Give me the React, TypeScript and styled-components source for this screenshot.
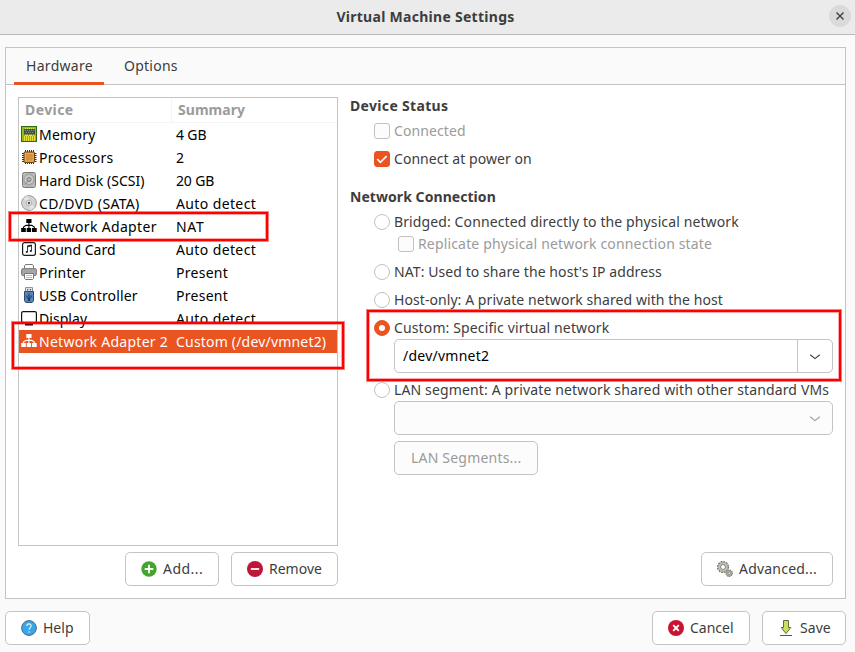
import React from 'react';
import styled, { createGlobalStyle, css } from 'styled-components';

const GlobalStyle = createGlobalStyle`
  * { box-sizing: border-box; }
  html, body { margin: 0; padding: 0; background: #fafafa; overflow: hidden; }
  body { font-family: 'Noto Sans', sans-serif; font-size: 14px; color: #3d3d3d; }
  svg { display: block; flex: none; }
`;

const orange = '#e95420';
const line = '#c4c4c4';

const Window = styled.div`
  position: relative;
  width: 855px;
  height: 652px;
  display: flex;
  flex-direction: column;
  background: #fafafa;
`;

const TitleBar = styled.header`
  height: 35px;
  flex: none;
  display: grid;
  grid-template-columns: 30px 1fr 30px;
  align-items: center;
  padding-bottom: 2px;
  background: #ebebeb;
  border-bottom: 1px solid #bababa;
`;

const Title = styled.h1`
  grid-column: 2;
  margin: 0;
  padding: 2px 4px 0 0;
  text-align: center;
  font-size: 14px;
  line-height: 30px;
  font-weight: 700;
  letter-spacing: 0.28px;
`;

const CloseButton = styled.button`
  width: 22px;
  height: 22px;
  margin-left: 4px;
  padding: 0;
  border: 0;
  border-radius: 50%;
  display: grid;
  place-items: center;
  background: #dadada;
`;

const Notebook = styled.main`
  width: 841px;
  height: 552px;
  margin: 12px 0 0 5px;
  flex: none;
  border: 1px solid ${line};
  background: #fff;
  display: flex;
  flex-direction: column;
`;

const TabBar = styled.nav`
  height: 37px;
  flex: none;
  display: flex;
  padding-left: 8px;
  background: #fafafa;
  border-bottom: 1px solid ${line};
`;

const Tab = styled.button<{ $active?: boolean; $track: number }>`
  height: 37px;
  padding: 2px 11px 0 12px;
  border: 0;
  border-bottom: 3px solid ${p => (p.$active ? orange : 'transparent')};
  background: none;
  color: inherit;
  font: inherit;
  line-height: 32px;
  letter-spacing: ${p => p.$track}px;
  & + & { margin-left: 8px; }
`;

const Page = styled.div`
  flex: 1;
  display: grid;
  grid-template-columns: 320px 483px;
  column-gap: 12px;
  padding: 12px 0 0 12px;
`;

const Column = styled.section`
  height: 489px;
  display: flex;
  flex-direction: column;
  justify-content: space-between;
`;

const DeviceTable = styled.div`
  height: 449px;
  border: 1px solid ${line};
  background: #fff;
`;

const TableHead = styled.div`
  height: 25px;
  display: grid;
  grid-template-columns: 152px 1fr;
  border-bottom: 1px solid #f5f5f5;
  color: #9b9b9b;
  font-weight: 700;
  line-height: 24px;
`;

const HeadCell = styled.div<{ $track: number }>`
  padding-left: 6px;
  letter-spacing: ${p => p.$track}px;
  & + & { border-left: 1px solid #f5f5f5; }
`;

const DeviceRow = styled.div<{ $selected?: boolean }>`
  height: 23px;
  display: grid;
  grid-template-columns: 20px 137px 1fr;
  align-items: center;
  line-height: 23px;
  white-space: nowrap;
  color: ${p => (p.$selected ? '#fff' : '#000')};
  background: ${p => (p.$selected ? orange : 'transparent')};
`;

const IconCell = styled.div`
  padding: 0 0 1px 2px;
`;

const Text = styled.span<{ $track: number }>`
  letter-spacing: ${p => p.$track}px;
  white-space: nowrap;
`;

const ButtonRow = styled.div`
  display: flex;
  justify-content: flex-end;
  gap: 12px;
`;

const Button = styled.button<{ $width: number; $disabled?: boolean; $track?: number }>`
  width: ${p => p.$width}px;
  height: 34px;
  padding: 0 0 1px 15px;
  display: flex;
  align-items: center;
  gap: 6px;
  border: 1px solid ${line};
  border-radius: 5px;
  background: #fff;
  color: inherit;
  font: inherit;
  letter-spacing: ${p => p.$track ?? 0}px;
  white-space: nowrap;
  ${p => p.$disabled && css`background: #fcfcfc; color: #9b9b9b; padding-left: 16px;`}
`;

const Heading = styled.h2`
  margin: 0;
  height: 18px;
  font-size: 14px;
  line-height: 18px;
  font-weight: 700;
`;

const Settings = styled.div`
  display: flex;
  flex-direction: column;
`;

const Section = styled(Heading)`
  margin-top: 20px;
`;

const Option = styled.label<{ $top: number; $indent?: number; $disabled?: boolean }>`
  height: 18px;
  margin-top: ${p => p.$top}px;
  margin-left: ${p => p.$indent ?? 24}px;
  display: flex;
  align-items: center;
  gap: 4px;
  line-height: 18px;
  color: ${p => (p.$disabled ? '#9b9b9b' : 'inherit')};
`;

const Check = styled.span<{ $on?: boolean; $disabled?: boolean }>`
  width: 16px;
  height: 16px;
  flex: none;
  display: grid;
  place-items: center;
  border: 1px solid ${p => (p.$on ? orange : '#c2c2c2')};
  border-radius: 3px;
  background: ${p => (p.$on ? orange : p.$disabled ? '#fcfcfc' : '#fff')};
`;

const Radio = styled(Check)`
  border-radius: 50%;
  &::after {
    content: '';
    width: 6px;
    height: 6px;
    border-radius: 50%;
    background: #fff;
  }
`;

const Combo = styled.div<{ $top: number; $disabled?: boolean }>`
  width: 439px;
  height: 34px;
  margin: ${p => p.$top}px 0 0 44px;
  display: grid;
  grid-template-columns: 1fr 35px;
  border: 1px solid ${line};
  border-radius: 5px;
  background: ${p => (p.$disabled ? '#fcfcfc' : '#fff')};
  color: ${p => (p.$disabled ? '#9b9b9b' : '#3d3d3d')};
`;

const ComboValue = styled.span`
  padding-left: 8px;
  line-height: 32px;
  color: #000;
  letter-spacing: 0.24px;
`;

const ComboArrow = styled.span<{ $divided?: boolean }>`
  display: grid;
  place-items: center;
  padding-top: 2px;
  border-left: 1px solid ${p => (p.$divided ? line : 'transparent')};
`;

const SegmentRow = styled.div`
  margin: 6px 0 0 44px;
`;

const AdvancedRow = styled(ButtonRow)`
  width: 483px;
`;

const Footer = styled.footer`
  display: flex;
  gap: 12px;
  padding: 12px 9px 0 5px;
`;

const Spacer = styled.div`
  flex: 1;
`;

const Highlight = styled.div<{ $x: number; $y: number; $w: number; $h: number }>`
  position: absolute;
  left: ${p => p.$x}px;
  top: ${p => p.$y}px;
  width: ${p => p.$w}px;
  height: ${p => p.$h}px;
  border: 2px solid #fe0000;
  box-shadow: 0 0 0 1px rgba(254, 0, 0, 0.5), inset 0 0 0 1px rgba(254, 0, 0, 0.35);
  pointer-events: none;
`;

const Icon = ({ children }: { children: React.ReactNode }) => (
  <svg width="16" height="16" viewBox="0 0 16 16">{children}</svg>
);

const MemoryIcon = () => (
  <Icon>
    <rect x=".5" y=".5" width="15" height="15" fill="#86b81a" stroke="#2f6b0c" />
    <path d="M1.5 14.5V1.5h13v13" fill="none" stroke="#8fc41f" />
    <path d="M3.5 10v5M5.5 9v6M7.5 10v5M9.5 9v6M11.5 10v5M13.5 10v5" stroke="#e8df38" />
    <path d="M4.5 2v8M6.5 2v8M8.5 2v8M10.5 2v8M12.5 2v8" stroke="#d9d9cf" />
    <rect x="3" y="3" width="11" height="5.5" fill="#4d4f4a" />
    <path d="M4 4.5h9M5 6.5h8" stroke="#8b8d88" strokeDasharray="1 1" />
  </Icon>
);

const CpuIcon = () => (
  <Icon>
    <path d="M4.5 1v14M6.5 1v14M8.5 1v14M10.5 1v14M12.5 1v14M1 4.5h14.5M1 6.5h14.5M1 8.5h14.5M1 10.5h14.5M1 12.5h14.5" stroke="#3e2d13" />
    <rect x="3" y="3" width="10.5" height="10.5" rx="1" fill="#dd9a3c" stroke="#6b4511" />
    <rect x="4.5" y="4.5" width="7.5" height="7.5" fill="#d6913a" stroke="#e8b264" strokeWidth=".8" />
  </Icon>
);

const DiskIcon = () => (
  <Icon>
    <rect x="1.5" y=".5" width="13" height="15" rx="2" fill="#b5b6b4" stroke="#777977" />
    <circle cx="8" cy="7.5" r="5" fill="#c9cac8" stroke="#9a9c9a" />
    <circle cx="8" cy="7.5" r="2" fill="#b9b9b9" stroke="#777877" />
    <path d="M4 12.5l3-3.5" stroke="#888" />
    <path d="M3 2.5h.01M13 2.5h.01M13 13.5h.01M3 13.5h.01" stroke="#e4e4e4" strokeLinecap="round" />
  </Icon>
);

const DiscIcon = () => (
  <Icon>
    <circle cx="8" cy="8" r="7.4" fill="#d3d3d1" stroke="#9a9b99" />
    <path d="M8 8L2.5 4A7 7 0 0 1 7 1zM8 8l5.5 4A7 7 0 0 1 9 15z" fill="#e6e6e6" />
    <circle cx="8" cy="8" r="2.8" fill="#e9e9e9" stroke="#b5b5b5" />
    <circle cx="8" cy="8" r="1.2" fill="#555" />
  </Icon>
);

const NetworkIcon = () => (
  <Icon>
    <path d="M5.3 1h5.2v4H5.3zM.2 10h4.6v4H.2zM5.7 10h4.4v4H5.7zM11 10h4.7v4H11z" fill="currentColor" />
    <path d="M7.9 5v5.5M2.5 10.5V9L5 7.4h5.8L13.3 9v1.5" fill="none" stroke="currentColor" strokeWidth="1.1" />
  </Icon>
);

const SoundIcon = () => (
  <Icon>
    <rect x="1.6" y="1.6" width="12.8" height="12.8" rx="2" fill="#fff" stroke="#1b1b1b" strokeWidth="1.2" />
    <path d="M6.5 11V5l4-1v6" fill="none" stroke="#222" strokeWidth=".9" />
    <path d="M6.5 5.5l4-1" stroke="#222" strokeWidth="1.3" />
    <circle cx="5.8" cy="11" r="1.1" fill="#222" />
    <circle cx="9.8" cy="10" r="1.1" fill="#222" />
  </Icon>
);

const PrinterIcon = () => (
  <Icon>
    <path d="M3.5 6V2l1-1.5h7l1 1.5v4" fill="#fff" stroke="#777" />
    <rect x=".6" y="4.6" width="14.8" height="7" rx="1.5" fill="#a5a5a5" stroke="#7d7d7d" />
    <path d="M3.5 9.5h9v4.8l-1 1.2h-7l-1-1.2z" fill="#fff" stroke="#777" />
    <path d="M5 11.5h6M5 13.5h6" stroke="#b9b4ee" />
  </Icon>
);

const UsbIcon = () => (
  <Icon>
    <path d="M4.5 5V.6h7V5" fill="#ececec" stroke="#888" />
    <path d="M6 2h1.3v1.5H6zM8.8 2h1.3v1.5H8.8z" fill="#555" />
    <path d="M3.5 4.5h9v9.3l-1.3 1.7H4.8l-1.3-1.7z" fill="#5585b8" stroke="#2c4c70" />
    <path d="M8 6.5v7M5.9 8.5v1.7L8 12l2.1-1.8V8.5" fill="none" stroke="#152e4c" strokeWidth=".9" />
    <circle cx="8" cy="13" r="1" fill="#152e4c" />
  </Icon>
);

const DisplayIcon = () => (
  <Icon>
    <rect x=".6" y="1.6" width="14.8" height="11" rx="1.5" fill="#fff" stroke="#111" strokeWidth="1.2" />
    <path d="M6 12.5h4V14h2v1.5H4V14h2z" fill="#000" />
  </Icon>
);

const AddIcon = () => (
  <Icon>
    <circle cx="8" cy="8" r="7.7" fill="#43a52b" />
    <path d="M8 3.7v8.6M3.7 8h8.6" stroke="#fff" strokeWidth="1.8" />
  </Icon>
);

const RemoveIcon = () => (
  <Icon>
    <circle cx="8" cy="8" r="8" fill="#be1639" />
    <path d="M3.8 8h8.4" stroke="#f5e4e8" strokeWidth="2" />
  </Icon>
);

const HelpIcon = () => (
  <Icon>
    <circle cx="8" cy="8" r="7.4" fill="#38a6e8" stroke="#55697a" />
    <path d="M5.8 5.9C5.9 3 10.3 3.2 10.1 5.9 10 7.7 8 7.6 8 9.8M8 11.2v1.5" fill="none" stroke="#e3f3fd" strokeWidth="1.2" />
  </Icon>
);

const CancelIcon = () => (
  <Icon>
    <circle cx="8" cy="8" r="8" fill="#cb1230" />
    <path d="M5.2 5.2l5.6 5.6M10.8 5.2l-5.6 5.6" stroke="#fff" strokeWidth="1.9" />
  </Icon>
);

const SaveIcon = () => (
  <Icon>
    <path d="M5.5.5h5v7h2.3L8 13.6 3.2 7.5h2.3z" fill="#c5e256" stroke="#626a4b" />
    <path d="M2 15.5h12" stroke="#555" />
  </Icon>
);

const GearsIcon = () => (
  <Icon>
    <circle cx="6" cy="6" r="5.4" fill="none" stroke="#65655f" strokeWidth="1.2" strokeDasharray="1.7 1.1" />
    <circle cx="6" cy="6" r="3.7" fill="#fff" stroke="#c3c2b7" strokeWidth="2.2" />
    <circle cx="6" cy="6" r="4.9" fill="none" stroke="#7a7a72" strokeWidth=".6" />
    <circle cx="6" cy="6" r="2.5" fill="#fff" stroke="#66665f" strokeWidth=".8" />
    <circle cx="12.2" cy="12.2" r="3.3" fill="#c3c2b7" stroke="#65655f" strokeDasharray="1.2 .8" />
    <circle cx="12.2" cy="12.2" r="2.8" fill="#c3c2b7" stroke="#77776f" strokeWidth=".5" />
    <circle cx="12.2" cy="12.2" r="1.3" fill="#fff" stroke="#66665f" strokeWidth=".8" />
  </Icon>
);

const Chevron = () => (
  <svg width="12" height="8" viewBox="0 0 12 8">
    <path d="M1.2 1.8L6 5.6l4.8-3.8" fill="none" stroke="currentColor" strokeWidth="1.1" />
  </svg>
);

const Tick = () => (
  <svg width="14" height="14" viewBox="0 0 14 14">
    <path d="M2.2 7l3.2 3.3 6.2-6.2" fill="none" stroke="#fff" strokeWidth="1.7" />
  </svg>
);

type Device = { icon: React.FC; name: string; track: number; summary: string; sumTrack: number; selected?: boolean };

const devices: Device[] = [
  { icon: MemoryIcon, name: 'Memory', track: 0.25, summary: '4 GB', sumTrack: -0.15 },
  { icon: CpuIcon, name: 'Processors', track: 0.32, summary: '2', sumTrack: 0 },
  { icon: DiskIcon, name: 'Hard Disk (SCSI)', track: 0.03, summary: '20 GB', sumTrack: -0.15 },
  { icon: DiscIcon, name: 'CD/DVD (SATA)', track: 0.32, summary: 'Auto detect', sumTrack: 0.38 },
  { icon: NetworkIcon, name: 'Network Adapter', track: 0.34, summary: 'NAT', sumTrack: 0.7 },
  { icon: SoundIcon, name: 'Sound Card', track: 0, summary: 'Auto detect', sumTrack: 0.38 },
  { icon: PrinterIcon, name: 'Printer', track: 0.22, summary: 'Present', sumTrack: 0.28 },
  { icon: UsbIcon, name: 'USB Controller', track: 0.15, summary: 'Present', sumTrack: 0.28 },
  { icon: DisplayIcon, name: 'Display', track: 0.05, summary: 'Auto detect', sumTrack: 0.38 },
  { icon: NetworkIcon, name: 'Network Adapter 2', track: 0.28, summary: 'Custom (/dev/vmnet2)', sumTrack: 0.19, selected: true },
];

export default function App() {
  return (
    <Window>
      <GlobalStyle />
      <TitleBar>
        <Title>Virtual Machine Settings</Title>
        <CloseButton aria-label="Close">
          <svg width="8" height="8" viewBox="0 0 8 8">
            <path d="M.5.5l7 7M7.5.5l-7 7" stroke="#3d3d3d" strokeWidth="1.4" />
          </svg>
        </CloseButton>
      </TitleBar>

      <Notebook>
        <TabBar>
          <Tab $active $track={0.3}>Hardware</Tab>
          <Tab $track={0.25}>Options</Tab>
        </TabBar>
        <Page>
          <Column>
            <DeviceTable>
              <TableHead>
                <HeadCell $track={0.42}>Device</HeadCell>
                <HeadCell $track={0.04}>Summary</HeadCell>
              </TableHead>
              {devices.map(d => (
                <DeviceRow key={d.name} $selected={d.selected}>
                  <IconCell><d.icon /></IconCell>
                  <Text $track={d.track}>{d.name}</Text>
                  <Text $track={d.sumTrack}>{d.summary}</Text>
                </DeviceRow>
              ))}
            </DeviceTable>
            <ButtonRow>
              <Button $width={94} $track={0.47}><AddIcon />Add...</Button>
              <Button $width={107}><RemoveIcon />Remove</Button>
            </ButtonRow>
          </Column>

          <Column>
            <Settings>
              <Heading><Text $track={0.33}>Device Status</Text></Heading>
              <Option $top={7} $disabled><Check $disabled /><Text $track={0.1}>Connected</Text></Option>
              <Option $top={10}><Check $on><Tick /></Check><Text $track={0.05}>Connect at power on</Text></Option>
              <Section><Text $track={0.06}>Network Connection</Text></Section>
              <Option $top={7}><Radio /><Text $track={0.11}>Bridged: Connected directly to the physical network</Text></Option>
              <Option $top={4} $indent={48} $disabled><Check $disabled /><Text $track={0.16}>Replicate physical network connection state</Text></Option>
              <Option $top={10}><Radio /><Text $track={0.08}>NAT: Used to share the host's IP address</Text></Option>
              <Option $top={10}><Radio /><Text $track={0.07}>Host-only: A private network shared with the host</Text></Option>
              <Option $top={10}><Radio $on /><Text $track={0.13}>Custom: Specific virtual network</Text></Option>
              <Combo $top={2}>
                <ComboValue>/dev/vmnet2</ComboValue>
                <ComboArrow $divided><Chevron /></ComboArrow>
              </Combo>
              <Option $top={8}><Radio /><Text $track={0.14}>LAN segment: A private network shared with other standard VMs</Text></Option>
              <Combo $top={2} $disabled>
                <ComboValue />
                <ComboArrow><Chevron /></ComboArrow>
              </Combo>
              <SegmentRow>
                <Button $width={144} $disabled $track={0.2}>LAN Segments...</Button>
              </SegmentRow>
            </Settings>
            <AdvancedRow>
              <Button $width={132} $track={0.21}><GearsIcon />Advanced...</Button>
            </AdvancedRow>
          </Column>
        </Page>
      </Notebook>

      <Footer>
        <Button $width={85}><HelpIcon />Help</Button>
        <Spacer />
        <Button $width={98}><CancelIcon />Cancel</Button>
        <Button $width={84} $track={0.05}><SaveIcon />Save</Button>
      </Footer>

      <Highlight $x={9} $y={212} $w={259} $h={29} />
      <Highlight $x={12} $y={322} $w={332} $h={47} />
      <Highlight $x={367} $y={310} $w={474} $h={71} />
    </Window>
  );
}
